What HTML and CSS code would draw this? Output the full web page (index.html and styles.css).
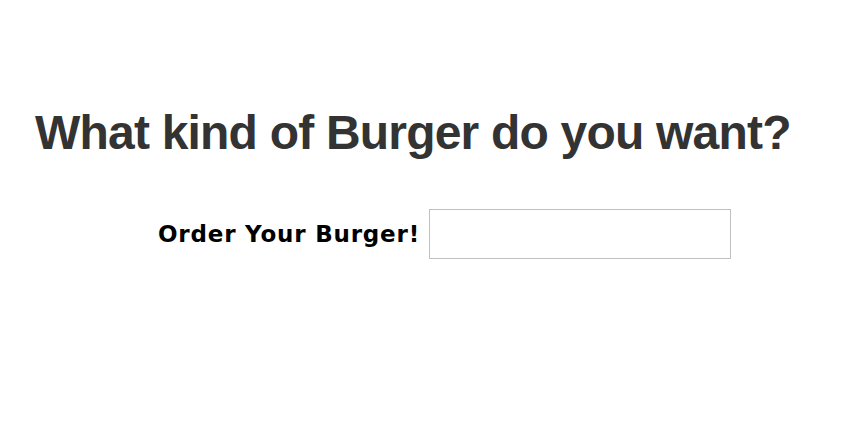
FILE: index.html
```html
<!DOCTYPE html>
<html>
<head>
<meta charset="utf-8">
<link rel="stylesheet" href="styles.css">
</head>
<body>
<div class="page">
  <h1 class="title">What kind of Burger do you want?</h1>
  <form class="order">
    <label class="order-label" for="burger">Order Your Burger!</label>
    <input class="order-input" id="burger" type="text">
  </form>
</div>
</body>
</html>
```
FILE: styles.css
```css
html, body {
  margin: 0;
  padding: 0;
  background: #fff;
}
.page {
  padding-top: 105px;
  padding-left: 35px;
}
.title {
  margin: 0;
  font-family: "Liberation Sans", Arial, sans-serif;
  font-weight: bold;
  font-size: 48px;
  letter-spacing: -0.8px;
  line-height: 56px;
  color: #333;
  white-space: nowrap;
}
.order {
  display: flex;
  align-items: center;
  margin-top: 48px;
  padding-left: 123px;
  gap: 9px;
}
.order-label {
  font-family: "Comic Sans MS", "DejaVu Sans", sans-serif;
  font-weight: bold;
  font-size: 23px;
  letter-spacing: 0.8px;
  color: #000;
}
.order-input {
  box-sizing: border-box;
  width: 302px;
  height: 50px;
  margin: 0;
  border: 1px solid #c0c0c0;
  background: #fff;
}
```
